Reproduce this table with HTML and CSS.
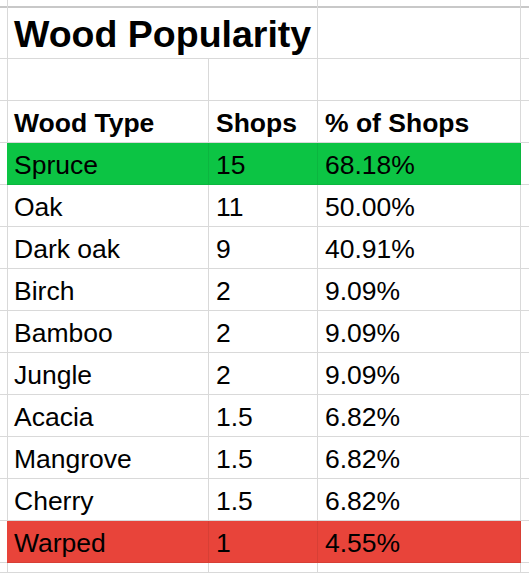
FILE: index.html
```html
<!DOCTYPE html>
<html>
<head>
<meta charset="utf-8">
<link rel="stylesheet" href="styles.css">
</head>
<body>
<div class="sheet">
  <div class="c"></div><div class="c span2"></div><div class="c"></div><div class="c end"></div>

  <div class="c"></div><div class="c span2 title">Wood Popularity</div><div class="c"></div><div class="c end"></div>

  <div class="c"></div><div class="c"></div><div class="c"></div><div class="c"></div><div class="c end"></div>

  <div class="c"></div><div class="c hd">Wood Type</div><div class="c hd">Shops</div><div class="c hd">% of Shops</div><div class="c end"></div>

  <div class="c"></div><div class="c green">Spruce</div><div class="c green">15</div><div class="c green">68.18%</div><div class="c end"></div>
  <div class="c"></div><div class="c">Oak</div><div class="c">11</div><div class="c">50.00%</div><div class="c end"></div>
  <div class="c"></div><div class="c">Dark oak</div><div class="c">9</div><div class="c">40.91%</div><div class="c end"></div>
  <div class="c"></div><div class="c">Birch</div><div class="c">2</div><div class="c">9.09%</div><div class="c end"></div>
  <div class="c"></div><div class="c">Bamboo</div><div class="c">2</div><div class="c">9.09%</div><div class="c end"></div>
  <div class="c"></div><div class="c">Jungle</div><div class="c">2</div><div class="c">9.09%</div><div class="c end"></div>
  <div class="c"></div><div class="c">Acacia</div><div class="c">1.5</div><div class="c">6.82%</div><div class="c end"></div>
  <div class="c"></div><div class="c">Mangrove</div><div class="c">1.5</div><div class="c">6.82%</div><div class="c end"></div>
  <div class="c"></div><div class="c">Cherry</div><div class="c">1.5</div><div class="c">6.82%</div><div class="c end"></div>
  <div class="c"></div><div class="c red">Warped</div><div class="c red">1</div><div class="c red">4.55%</div><div class="c end"></div>

  <div class="c"></div><div class="c"></div><div class="c"></div><div class="c"></div><div class="c end"></div>
</div>
</body>
</html>
```
FILE: styles.css
```css
* { box-sizing: border-box; }
html, body { margin: 0; padding: 0; background: #fff; }
.sheet {
  display: grid;
  grid-template-columns: 7px 202px 109px 203px 1fr;
  grid-template-rows: 5px 54px 42px 42px repeat(10, 42px) 1fr;
  width: 529px;
  height: 573px;
  overflow: hidden;
  font-family: "Liberation Sans", Arial, sans-serif;
  font-size: 26.5px;
  line-height: 26px;
  color: #000;
}
.c {
  border-right: 1px solid #d9d9d9;
  border-bottom: 1px solid #d9d9d9;
  display: flex;
  align-items: flex-end;
  padding: 0 0 6px 7px;
  white-space: nowrap;
  overflow: visible;
}
.sheet > .c:nth-child(-n+4) { border-bottom: 2px solid #c8c8c8; }
.end { border-right: none; }
.span2 { grid-column: span 2; }
.title {
  font-weight: bold;
  font-size: 37.5px;
  line-height: 37px;
  padding-bottom: 5px;
}
.hd { font-weight: bold; }
.green {
  background: #0cc444;
  border-right-color: rgba(0, 0, 0, 0.07);
  border-bottom-color: rgba(0, 0, 0, 0.07);
}
.red {
  background: #e8443a;
  border-right-color: rgba(0, 0, 0, 0.07);
  border-bottom-color: rgba(0, 0, 0, 0.07);
}
```
